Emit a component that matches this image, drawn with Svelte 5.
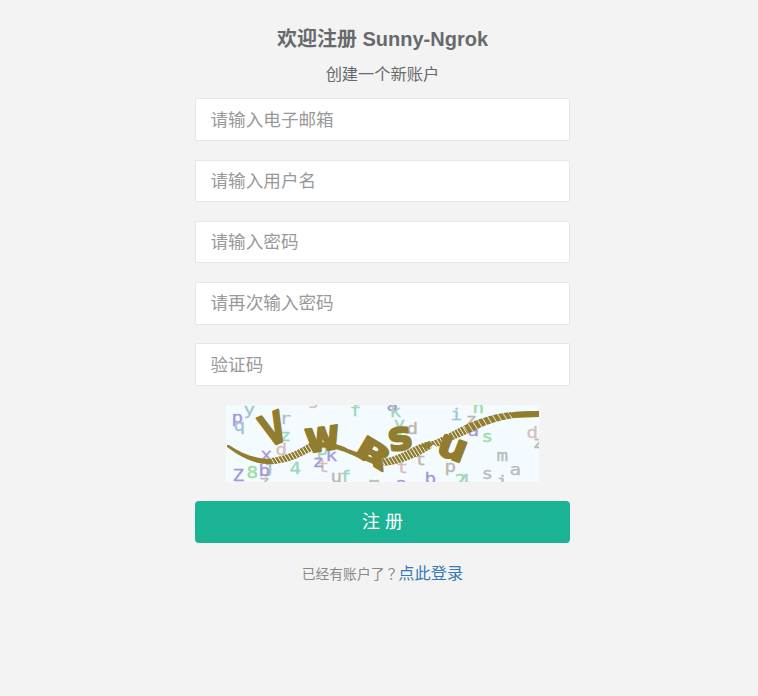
<script>
  const fields = [
    { type: 'email', hint: '请输入电子邮箱' },
    { type: 'text', hint: '请输入用户名' },
    { type: 'password', hint: '请输入密码' },
    { type: 'password', hint: '请再次输入密码' },
    { type: 'text', hint: '验证码' }
  ];

  const violet = '#a596e0';
  const green = '#98dda2';
  const mint = '#a0d5bd';
  const blue = '#a2c5d3';
  const grey = '#b3bebd';
  const rose = '#d8bdb9';
  const taupe = '#c0b4ad';

  // [character, x, baseline, colour]
  const noise = [
    ['p', 6, 18, violet], ['y', 18, 10, blue], ['q', 8, 26, blue],
    ['r', 54, 19, grey], ['z', 54, 36, mint], ['d', 50, 50, rose],
    ['x', 35, 55, violet], ['Z', 7, 76, violet], ['8', 21, 73, green],
    ['j', 38, 68, grey], ['b', 33, 71, violet], ['z', 33, 82, grey],
    ['4', 64, 69, mint], ['p', 91, 50, mint], ['t', 92, 67, rose],
    ['z', 87, 62, violet], ['k', 100, 56, violet], ['g', 82, 0, rose],
    ['u', 105, 77, taupe], ['f', 114, 77, mint], ['f', 124, 11, mint],
    ['a', 161, 6, violet], ['k', 164, 12, mint], ['y', 168, 24, mint],
    ['o', 167, 30, green], ['d', 181, 29, taupe], ['t', 171, 68, rose],
    ['t', 189, 60, taupe], ['m', 143, 84, grey], ['a', 170, 84, violet],
    ['b', 199, 79, violet], ['i', 225, 15, blue], ['n', 247, 8, green],
    ['z', 240, 20, taupe], ['a', 242, 31, violet], ['s', 256, 37, green],
    ['d', 301, 33, rose], ['z', 307, 43, grey], ['m', 271, 56, grey],
    ['a', 284, 70, grey], ['s', 256, 74, grey], ['p', 219, 67, taupe],
    ['2', 229, 81, green], ['4', 233, 81, mint], ['i', 271, 82, grey]
  ];
</script>

<main>
  <h3>欢迎注册 Sunny-Ngrok</h3>
  <p class="intro">创建一个新账户</p>
  <form onsubmit={(e) => e.preventDefault()}>
    {#each fields as field}
      <input type={field.type} placeholder={field.hint} />
    {/each}
    <svg class="captcha" viewBox="0 0 313 77" width="313" height="77">
      <defs>
        <pattern id="hatch" width="3.2" height="10" patternUnits="userSpaceOnUse" patternTransform="rotate(-32)">
          <rect width="3.2" height="10" fill="#927c2d" />
          <rect width="0.8" height="10" fill="#f3fbff" />
        </pattern>
        <pattern id="hatch-wide" width="5" height="10" patternUnits="userSpaceOnUse" patternTransform="rotate(-32)">
          <rect width="5" height="10" fill="#927c2d" />
          <rect width="0.8" height="10" fill="#f3fbff" />
        </pattern>
      </defs>
      <rect width="313" height="77" fill="#f3fbff" />
      <g class="noise">
        {#each noise as [char, x, y, color]}
          <text transform="translate({x - 0.5} {y}) scale(1.17 1)" fill={color} stroke={color}>{char}</text>
        {/each}
      </g>
      <path fill="#927c2d" d="M1 40 L3 40 C16 49 29 54 47 54 L51 59 C33 60 20 56 1 42 Z" />
      <path fill="url(#hatch)" d="M45 53 C62 51 75 43 84 38 L88 45 C76 51 64 58 47 59 Z" />
      <path fill="#927c2d" d="M82 39 C98 35 113 39 122 44 L156 56 L154 62 L119 47 C108 43 98 41 86 44 Z" />
      <path fill="url(#hatch)" d="M155 54 C174 52 184 42 200 37 L206 43 C193 51 177 59 158 61 Z" />
      <path fill="#927c2d" d="M194 41 L203 36 L209 38 L202 44 Z" />
      <path fill="url(#hatch)" d="M204 37 C215 33 225 27 237 21 L243 28 L211 42 Z" />
      <path fill="url(#hatch-wide)" d="M237 21 C250 15 262 10 284 7 L289 13 C267 16 255 22 243 28 Z" />
      <path fill="#927c2d" d="M282 8 C292 6 302 6 313 6 L313 12 L288 13 Z" />
      <g class="code">
        <text transform="translate(42 42.5) rotate(-22)" font-size="43" textLength="24" lengthAdjust="spacingAndGlyphs">V</text>
        <text transform="translate(81 48) rotate(-8)" font-size="43" textLength="35" lengthAdjust="spacingAndGlyphs">w</text>
        <text transform="translate(127 48.5) rotate(31)" font-size="31" textLength="35" lengthAdjust="spacingAndGlyphs">R</text>
        <text transform="translate(164 46.5) rotate(-9)" font-size="40" textLength="24" lengthAdjust="spacingAndGlyphs">s</text>
        <text transform="translate(209 48) rotate(21)" font-size="38" textLength="29" lengthAdjust="spacingAndGlyphs">u</text>
      </g>
    </svg>
    <button type="submit">注 册</button>
    <p class="login"><small>已经有账户了<span class="mark">？</span></small><a href="#login">点此登录</a></p>
  </form>
</main>

<style>
  :global(body) {
    background: #f3f3f3;
  }

  main {
    width: 375px;
    margin-left: 195px;
    padding-top: 26px;
    font-family: 'Liberation Sans', 'Noto Sans CJK SC', sans-serif;
    color: #676a6c;
    text-align: center;
  }

  h3 {
    margin: 0;
    font-size: 20px;
    line-height: 26px;
    font-weight: 700;
  }

  .intro {
    margin: 11px 0 12.25px;
    font-size: 16.25px;
    line-height: 23px;
  }

  form {
    display: flex;
    flex-direction: column;
    align-items: center;
  }

  input {
    box-sizing: border-box;
    width: 375px;
    height: 42.5px;
    margin: 0 0 18.75px;
    padding: 8px 14.5px 7px;
    border: 1px solid #e5e6e7;
    border-radius: 1px;
    background: #fff;
    font: 17.6px 'Liberation Sans', 'Noto Sans CJK SC', sans-serif;
    outline: none;
  }

  input::placeholder {
    color: #999;
    opacity: 1;
  }

  .captcha {
    display: block;
    margin: 0.5px 0 19px;
    overflow: hidden;
  }

  .noise {
    font: 16.5px 'DejaVu Sans Mono', monospace;
    stroke-width: 0.3;
  }

  .code {
    font-family: 'DejaVu Sans', sans-serif;
    font-weight: 700;
    fill: #927c2d;
    stroke: #927c2d;
    stroke-width: 2;
    stroke-linejoin: round;
  }

  button {
    width: 375px;
    height: 42px;
    padding: 0 0 4px;
    border: 0;
    border-radius: 4px;
    background: #1ab394;
    color: #fff;
    font: 18px 'Liberation Sans', 'Noto Sans CJK SC', sans-serif;
  }

  .login {
    margin: 19px 0 0;
    font-size: 16.25px;
    line-height: 23px;
    white-space: nowrap;
  }

  small {
    font-size: 13.8px;
    color: #888;
  }

  .mark {
    font-family: 'Noto Sans CJK TC', sans-serif;
  }

  a {
    color: #337ab7;
    text-decoration: none;
  }
</style>
